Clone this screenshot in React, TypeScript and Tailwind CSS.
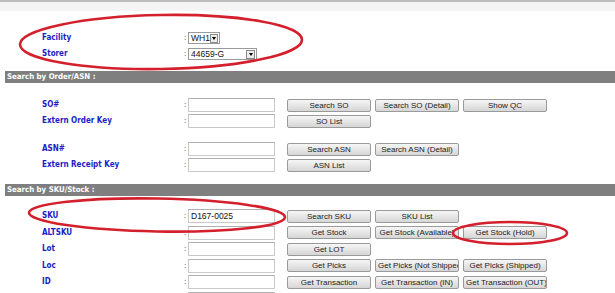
import React from "react";

const font = { fontFamily: '"Liberation Sans", Arial, sans-serif' };
const lblFont = { fontFamily: '"DejaVu Sans Condensed", "DejaVu Sans", sans-serif' };

function Btn({ t }: { t: string }) {
  return (
    <div className="w-[84px] h-[13px] shrink-0 overflow-hidden whitespace-nowrap text-center text-[8px] leading-[11px] text-[#222] border border-[#9a9a9a] rounded-[2px] bg-gradient-to-b from-[#f6f6f6] to-[#d6d6d6] px-[2px]">
      {t}
    </div>
  );
}

function Input({ v }: { v?: string }) {
  return (
    <div className="w-[87px] h-[14px] shrink-0 border border-[#c9c9c9] border-t-[#b0b0b0] bg-white text-[8.5px] leading-[12px] pl-[2px] text-[#111]">
      {v}
    </div>
  );
}

function Row({ label, v, btns, h = "h-[16px]", colon = true }: { label: string; v?: string; btns?: string[]; h?: string; colon?: boolean }) {
  return (
    <div className={`flex items-center ${h}`}>
      <div className="w-[184px] pl-[42px] text-[8px] font-bold font-stretch-condensed text-[#1c1cc8] whitespace-nowrap" style={lblFont}>
        {label}
      </div>
      <div className="w-[4px] text-[8px] text-[#333] leading-none">{colon ? ":" : ""}</div>
      <Input v={v} />
      <div className="flex gap-[4px] ml-[12px]">
        {btns?.map((b) => (
          <Btn key={b} t={b} />
        ))}
      </div>
    </div>
  );
}

function Select({ w, v }: { w: string; v: string }) {
  return (
    <div className={`${w} h-[12px] border border-[#9a9a9a] bg-white flex items-center justify-between pl-[2px] pr-[1px]`}>
      <span className="text-[8.5px] leading-none text-[#111]">{v}</span>
      <div className="w-[9px] h-[9px] border border-[#8a8a8a] bg-[#ececec] flex items-center justify-center">
        <div className="w-0 h-0 border-l-[2.5px] border-r-[2.5px] border-t-[3px] border-l-transparent border-r-transparent border-t-black" />
      </div>
    </div>
  );
}

function SelRow({ label, w, v }: { label: string; w: string; v: string }) {
  return (
    <div className="flex items-center h-[16px]">
      <div className="w-[184px] pl-[42px] text-[8px] font-bold font-stretch-condensed text-[#1c1cc8]" style={lblFont}>
        {label}
      </div>
      <div className="w-[4px] text-[8px] text-[#333] leading-none">:</div>
      <Select w={w} v={v} />
    </div>
  );
}

function Bar({ t }: { t: string }) {
  return (
    <div className="ml-[5px] h-[12px] bg-[#7f7f7f] text-white font-bold font-stretch-condensed text-[7.8px] leading-[12px] pl-[2px] whitespace-nowrap" style={lblFont}>
      {t}
    </div>
  );
}

export default function App() {
  return (
    <div className="relative w-[615px] h-[293px] overflow-hidden bg-white" style={font}>
      <div className="h-[2px] bg-[#bdbdbd]" />
      <div className="h-[9px] bg-[#f5f5f5]" />
      <div className="h-[19px]" />
      <SelRow label="Facility" w="w-[32px]" v="WH1" />
      <SelRow label="Storer" w="w-[69px]" v="44659-G" />
      <div className="h-[9px]" />
      <Bar t="Search by Order/ASN :" />
      <div className="h-[14px]" />
      <Row label="SO#" btns={["Search SO", "Search SO (Detail)", "Show QC"]} />
      <Row label="Extern Order Key" btns={["SO List"]} />
      <div className="h-[12px]" />
      <Row label="ASN#" btns={["Search ASN", "Search ASN (Detail)"]} />
      <Row label="Extern Receipt Key" btns={["ASN List"]} />
      <div className="h-[11px]" />
      <Bar t="Search by SKU/Stock :" />
      <div className="h-[12px]" />
      <Row label="SKU" v="D167-0025" btns={["Search SKU", "SKU List"]} h="h-[16.5px]" />
      <Row label="ALTSKU" btns={["Get Stock", "Get Stock (Available)", "Get Stock (Hold)"]} h="h-[16.5px]" />
      <Row label="Lot" btns={["Get LOT"]} h="h-[16.5px]" />
      <Row label="Loc" btns={["Get Picks", "Get Picks (Not Shipped)", "Get Picks (Shipped)"]} h="h-[16.5px]" />
      <Row label="ID" btns={["Get Transaction", "Get Transaction (IN)", "Get Transaction (OUT)"]} h="h-[16.5px]" />
      <Row label="" h="h-[16.5px]" colon={false} />

      <svg className="absolute inset-0 pointer-events-none" width="615" height="293" viewBox="0 0 615 293">
        <ellipse cx="161" cy="42" rx="141" ry="27" fill="none" stroke="#d3202c" strokeWidth="2.6" transform="rotate(-1 161 42)" />
        <ellipse cx="157" cy="215" rx="128" ry="16.5" fill="none" stroke="#d3202c" strokeWidth="2.6" transform="rotate(1 157 215)" />
        <ellipse cx="510" cy="233" rx="57" ry="11" fill="none" stroke="#d3202c" strokeWidth="2.6" />
      </svg>
    </div>
  );
}
